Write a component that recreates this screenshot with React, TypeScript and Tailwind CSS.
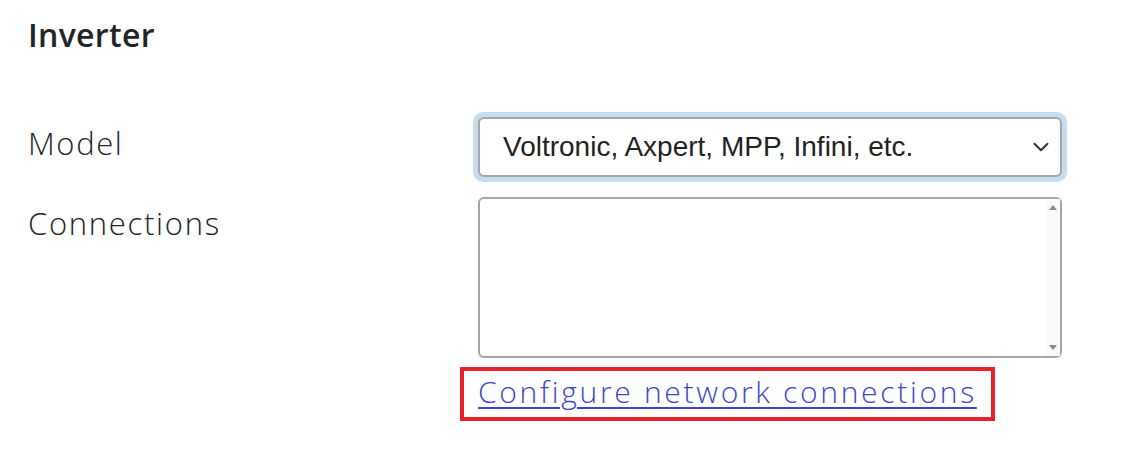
import { ChevronDown } from "lucide-react";

export default function App() {
  return (
    <div className="min-h-[466px] w-[1137px] bg-white pl-[28px] pt-[16px] text-[#212529]" style={{ fontFamily: '"Open Sans", sans-serif' }}>
      <h2 className="text-[32px] font-semibold leading-[38px] tracking-[0.3px]">Inverter</h2>

      <div className="mt-[63px] grid grid-cols-[450px_584px] gap-y-[20px]">
        {/* Model */}
        <label className="pt-[4px] text-[31px] font-light leading-[44px] tracking-[1.6px]">Model</label>
        <div className="relative">
          <div className="absolute -inset-[5px] rounded-[10px] bg-[#c6dcef]" />
          <div className="relative flex h-[60px] items-center rounded-[6px] border-2 border-[#a6a6a6] bg-white pl-[23px] pr-[6px]">
            <span className="flex-1 text-[28px] text-[#222]" style={{ fontFamily: '"Liberation Sans", Arial, sans-serif' }}>
              Voltronic, Axpert, MPP, Infini, etc.
            </span>
            <ChevronDown className="h-[26px] w-[26px] text-[#333]" strokeWidth={1.8} />
          </div>
        </div>

        {/* Connections */}
        <label className="text-[31px] font-light leading-[52px] tracking-[1.7px]">Connections</label>
        <div>
          <div className="flex h-[161px] rounded-[6px] border-2 border-[#a6a6a6] bg-white">
            <div className="flex-1" />
            <div className="flex w-[14px] flex-col items-center justify-between bg-[#fafafa] py-[6px] text-[#8a8a8a]">
              <svg width="8" height="5" viewBox="0 0 8 5"><path d="M4 0 L8 5 L0 5 Z" fill="currentColor" /></svg>
              <svg width="8" height="5" viewBox="0 0 8 5"><path d="M0 0 L8 0 L4 5 Z" fill="currentColor" /></svg>
            </div>
          </div>
          <div className="-ml-[18px] mt-[9px] inline-block border-4 border-[#e8212b] px-[14px] pb-[6px] pt-[2px]">
            <a href="#" className="text-[30px] font-light leading-[38px] tracking-[2.7px] text-[#3b45cc] underline decoration-[2px] underline-offset-[4px]">
              Configure network connections
            </a>
          </div>
        </div>
      </div>
    </div>
  );
}
